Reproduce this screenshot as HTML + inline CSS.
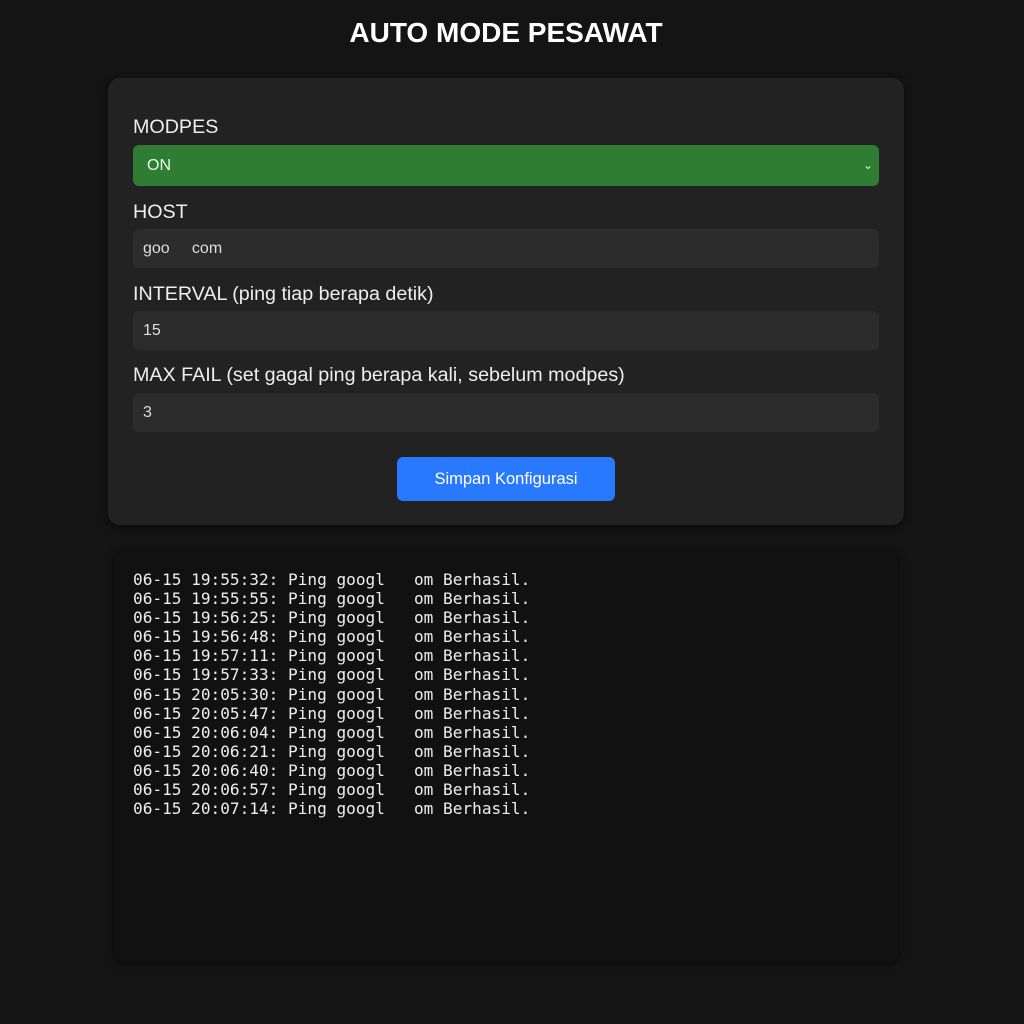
<!DOCTYPE html>
<html><head><style>
body{margin:0;background:#141414;width:1024px;height:1024px;font-family:"Liberation Sans",sans-serif;color:#eee;position:relative;overflow:hidden}
h1{position:absolute;top:17px;left:-6px;width:1024px;text-align:center;margin:0;font-size:28px;font-weight:bold;color:#fff}
.card{position:absolute;left:108px;top:78px;width:796px;height:447px;background:#222;border-radius:12px;box-shadow:0 2px 8px rgba(0,0,0,.6)}
.lbl{position:absolute;left:133px;font-size:19.7px;color:#eee}
.in{position:absolute;left:133px;width:746px;height:39px;background:#2c2c2c;border-radius:6px;font-size:16px;line-height:39px;padding-left:10px;box-sizing:border-box;color:#ddd}
.sel{background:#2e7d32;color:#e8ffe8;padding-left:14px}
.btn{position:absolute;left:397px;top:457px;width:218px;height:44px;background:#2979ff;border-radius:6px;color:#fff;font-size:16.5px;text-align:center;line-height:44px}
.log{position:absolute;left:114px;top:550px;width:784px;height:412px;background:#111;border-radius:10px;box-shadow:0 2px 8px rgba(0,0,0,.6)}
pre{position:absolute;left:133px;top:570px;margin:0;font-family:"DejaVu Sans Mono",monospace;font-size:16.1px;line-height:19.1px;color:#eee;white-space:pre}
</style></head><body>
<h1>AUTO MODE PESAWAT</h1>
<div class="card"></div>
<div class="lbl" style="top:116px">MODPES</div>
<div class="in sel" style="top:145px;height:41px;line-height:41px">ON<span style="position:absolute;right:6px;font-size:12px;color:#cfc">&#8964;</span></div>
<div class="lbl" style="top:201px">HOST</div>
<div class="in" style="top:229px">goo&nbsp;&nbsp;&nbsp;&nbsp;&nbsp;com</div>
<div class="lbl" style="top:283px">INTERVAL (ping tiap berapa detik)</div>
<div class="in" style="top:311px">15</div>
<div class="lbl" style="top:364px">MAX FAIL (set gagal ping berapa kali, sebelum modpes)</div>
<div class="in" style="top:393px">3</div>
<div class="btn">Simpan Konfigurasi</div>
<div class="log"></div>
<pre>06-15 19:55:32: Ping googl   om Berhasil.
06-15 19:55:55: Ping googl   om Berhasil.
06-15 19:56:25: Ping googl   om Berhasil.
06-15 19:56:48: Ping googl   om Berhasil.
06-15 19:57:11: Ping googl   om Berhasil.
06-15 19:57:33: Ping googl   om Berhasil.
06-15 20:05:30: Ping googl   om Berhasil.
06-15 20:05:47: Ping googl   om Berhasil.
06-15 20:06:04: Ping googl   om Berhasil.
06-15 20:06:21: Ping googl   om Berhasil.
06-15 20:06:40: Ping googl   om Berhasil.
06-15 20:06:57: Ping googl   om Berhasil.
06-15 20:07:14: Ping googl   om Berhasil.</pre>
</body></html>
